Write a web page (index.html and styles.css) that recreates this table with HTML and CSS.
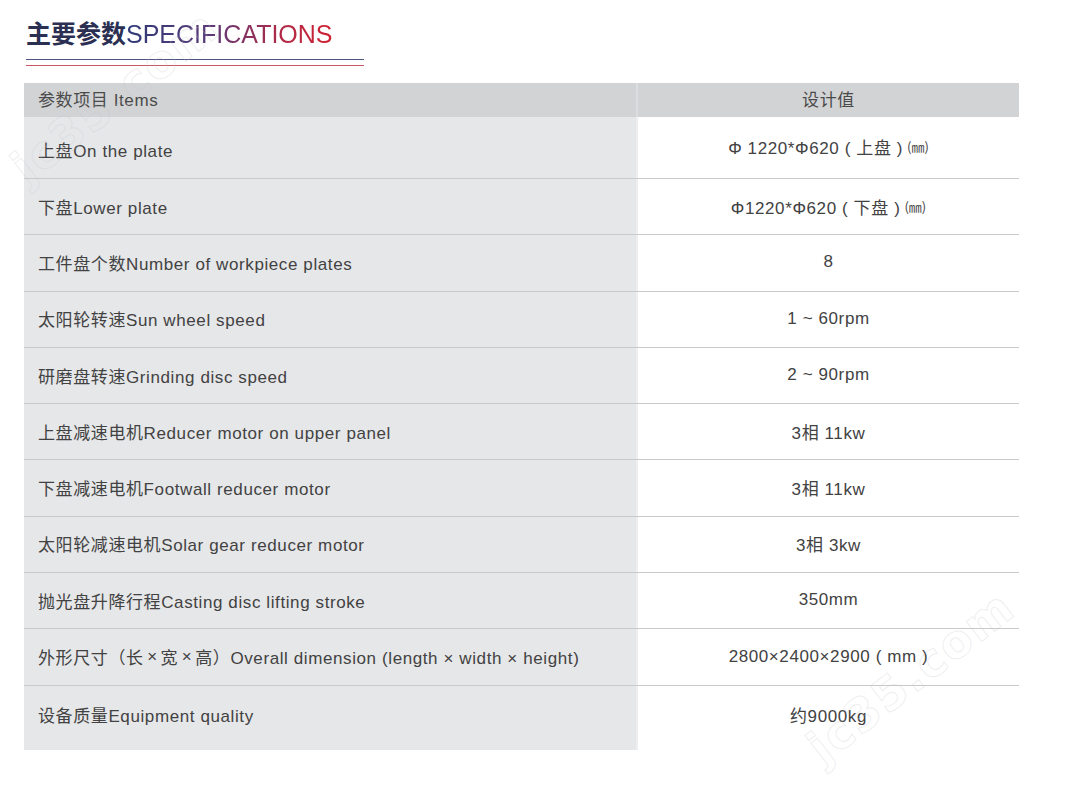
FILE: index.html
```html
<!DOCTYPE html>
<html lang="zh-CN">
<head>
<meta charset="utf-8">
<title>主要参数 SPECIFICATIONS</title>
<link rel="stylesheet" href="styles.css">
</head>
<body>
<div class="page">
  <div class="heading">
    <h1 class="title"><span class="title-cn">主要参数</span><span class="title-en">SPECIFICATIONS</span></h1>
    <div class="rule"></div>
  </div>

  <div class="spec">
    <div class="row head">
      <div class="cell name">参数项目 Items</div>
      <div class="cell val">设计值</div>
    </div>
    <div class="row first">
      <div class="cell name">上盘On the plate</div>
      <div class="cell val">Φ 1220*Φ620 ( 上盘 ) <span class="unit">(㎜)</span></div>
    </div>
    <div class="row">
      <div class="cell name">下盘Lower plate</div>
      <div class="cell val">Φ1220*Φ620 ( 下盘 ) <span class="unit">(㎜)</span></div>
    </div>
    <div class="row">
      <div class="cell name">工件盘个数Number of workpiece plates</div>
      <div class="cell val">8</div>
    </div>
    <div class="row">
      <div class="cell name">太阳轮转速Sun wheel speed</div>
      <div class="cell val">1 ~ 60rpm</div>
    </div>
    <div class="row">
      <div class="cell name">研磨盘转速Grinding disc speed</div>
      <div class="cell val">2 ~ 90rpm</div>
    </div>
    <div class="row">
      <div class="cell name">上盘减速电机Reducer motor on upper panel</div>
      <div class="cell val">3相 11kw</div>
    </div>
    <div class="row">
      <div class="cell name">下盘减速电机Footwall reducer motor</div>
      <div class="cell val">3相 11kw</div>
    </div>
    <div class="row">
      <div class="cell name">太阳轮减速电机Solar gear reducer motor</div>
      <div class="cell val">3相 3kw</div>
    </div>
    <div class="row">
      <div class="cell name">抛光盘升降行程Casting disc lifting stroke</div>
      <div class="cell val">350mm</div>
    </div>
    <div class="row">
      <div class="cell name">外形尺寸（长<span class="times">×</span>宽<span class="times">×</span>高）Overall dimension (length × width × height)</div>
      <div class="cell val">2800×2400×2900 ( mm )</div>
    </div>
    <div class="row last">
      <div class="cell name">设备质量Equipment quality</div>
      <div class="cell val">约9000kg</div>
    </div>
  </div>

  <div class="watermark wm-top" aria-hidden="true">jc35.com</div>
  <div class="watermark wm-bottom" aria-hidden="true">jc35.com</div>
</div>
</body>
</html>
```

FILE: styles.css
```css
html, body {
  margin: 0;
  padding: 0;
  background: #ffffff;
}

body {
  font-family: "Liberation Sans", Arial, "Noto Sans CJK SC", sans-serif;
  color: #424242;
}

.page {
  position: relative;
  width: 1067px;
  height: 803px;
  overflow: hidden;
  padding: 16px 0 0 24px;
  box-sizing: border-box;
}

.heading {
  padding-left: 2px;
}

.title {
  margin: 0;
  font-size: 25px;
  line-height: 32px;
  font-weight: normal;
  white-space: nowrap;
}

.title-cn {
  font-family: "Noto Sans CJK SC", sans-serif;
  font-weight: 700;
  color: #2b2f52;
}

.title-en {
  font-family: "Liberation Sans", Arial, sans-serif;
  background: linear-gradient(90deg, #2e3a78 0%, #5a3a78 40%, #b02a48 75%, #d1202f 100%);
  -webkit-background-clip: text;
  background-clip: text;
  color: transparent;
}

.rule {
  width: 338px;
  height: 7px;
  margin-top: 9px;
  border-top: 1px solid #4a5580;
  border-bottom: 1px solid #c65a64;
  box-sizing: border-box;
}

.spec {
  width: 995px;
  margin-top: 17px;
  font-size: 17px;
  letter-spacing: 0.6px;
}

.row {
  display: grid;
  grid-template-columns: 612px 383px;
  height: 56.3px;
  box-sizing: border-box;
  border-top: 1px solid #c9c9ca;
}

.row.head {
  height: 34px;
  border-top: none;
  background: #d2d3d5;
}

.row.first {
  height: 61px;
  border-top: none;
}

.row.last {
  height: 65px;
}

.cell {
  display: flex;
  align-items: center;
  padding-top: 0;
  padding-bottom: 1px;
  box-sizing: border-box;
  white-space: nowrap;
}

.name {
  padding-left: 14px;
  background: #e6e7e9;
}

.val {
  justify-content: center;
  border-left: 2px solid #eeeeef;
  background: #ffffff;
}

.head .cell {
  padding-top: 0;
  padding-bottom: 3px;
  color: #4a4a4a;
}

.head .name {
  background: #d2d3d5;
}

.head .val {
  background: #d2d3d5;
  border-left-color: #dcdde0;
}

.first .cell {
  padding-top: 3px;
  padding-bottom: 0;
}

.first .val {
  padding-top: 0;
  padding-bottom: 2px;
}

.last .cell {
  padding-top: 0;
  padding-bottom: 7px;
}

.unit {
  font-family: "Noto Sans CJK JP", "Noto Sans CJK SC", sans-serif;
  font-size: 13px;
  letter-spacing: 0;
  margin-left: 4px;
  color: #454545;
}

.times {
  display: inline-block;
  width: 17px;
  text-align: center;
  letter-spacing: 0;
}

.watermark {
  position: absolute;
  font-family: "DejaVu Sans", sans-serif;
  font-weight: bold;
  font-size: 46px;
  letter-spacing: 2px;
  color: transparent;
  -webkit-text-stroke: 1px rgba(200, 200, 205, 0.3);
  transform: rotate(-38deg);
  transform-origin: left bottom;
  pointer-events: none;
  white-space: nowrap;
}

.wm-top {
  left: 34px;
  top: 140px;
}

.wm-bottom {
  left: 830px;
  top: 720px;
}
```
